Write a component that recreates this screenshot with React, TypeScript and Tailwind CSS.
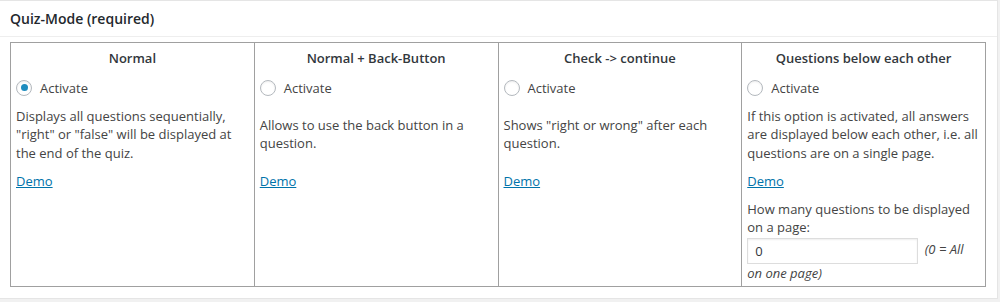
function Radio({ checked = false }: { checked?: boolean }) {
  return (
    <span className="inline-flex h-4 w-4 shrink-0 items-center justify-center rounded-full border border-[#b4b9be] bg-white shadow-[inset_0_1px_2px_rgba(0,0,0,0.07)]">
      {checked && <span className="h-[7px] w-[7px] rounded-full bg-[#1e8cbe]" />}
    </span>
  );
}

const modes = [
  {
    title: "Normal",
    checked: true,
    text: 'Displays all questions sequentially, "right" or "false" will be displayed at the end of the quiz.',
  },
  {
    title: "Normal + Back-Button",
    checked: false,
    text: "Allows to use the back button in a question.",
  },
  {
    title: "Check -> continue",
    checked: false,
    text: 'Shows "right or wrong" after each question.',
  },
  {
    title: "Questions below each other",
    checked: false,
    text: "If this option is activated, all answers are displayed below each other, i.e. all questions are on a single page.",
  },
];

export default function App() {
  return (
    <div
      className="h-[302px] w-[1000px] overflow-hidden bg-[#f1f1f1] text-[13px] leading-[1.4] text-[#444]"
      style={{ fontFamily: '"Open Sans", "Noto Sans", sans-serif' }}
    >
      <div className="h-[299px] w-[998px] border border-l-0 border-[#e5e5e5] bg-white">
        <h2 className="border-b border-[#eee] px-[10px] pb-[7px] pt-[8px] text-[14px] font-semibold leading-[1.4] text-[#23282d]">
          Quiz-Mode (required)
        </h2>
        <div className="pl-[10px] pr-[12px] pt-[5px]">
          <table className="w-[976px] table-fixed border-collapse border border-[#a0a0a0]">
            <tbody>
              <tr>
                {modes.map((m) => (
                  <th
                    key={m.title}
                    className="border-x border-[#a0a0a0] px-[5px] pb-[5px] pt-[5px] text-center text-[13px] font-semibold leading-[20px] text-[#32373c]"
                  >
                    {m.title}
                  </th>
                ))}
              </tr>
              <tr>
                {modes.map((m) => (
                  <td key={m.title} className="border-x border-[#a0a0a0] px-[5px] py-[5px]">
                    <label className="flex items-center gap-[8px] leading-[20px]">
                      <Radio checked={m.checked} />
                      Activate
                    </label>
                  </td>
                ))}
              </tr>
              <tr>
                {modes.map((m) => (
                  <td
                    key={m.title}
                    className="border-x border-[#a0a0a0] px-[5px] py-[4px] align-middle leading-[18.5px]"
                  >
                    {m.text}
                  </td>
                ))}
              </tr>
              <tr>
                {modes.map((m, i) => (
                  <td
                    key={m.title}
                    className="border-x border-[#a0a0a0] px-[5px] pb-[4px] pt-[6px] align-top leading-[18.5px]"
                  >
                    <a href="#" className="text-[#0073aa] underline">
                      Demo
                    </a>
                    {i === 3 && (
                      <div className="mt-[9px]">
                        How many questions to be displayed on a page:
                        <br />
                        <input
                          type="text"
                          defaultValue="0"
                          className="mr-[3px] mt-px h-[26px] w-[171px] border border-[#ddd] bg-white px-[7px] align-middle text-[13px] text-[#32373c] shadow-[inset_0_1px_2px_rgba(0,0,0,0.07)] outline-none"
                        />{" "}
                        <span className="text-[13px] italic leading-[18px]">(0 = All on one page)</span>
                      </div>
                    )}
                  </td>
                ))}
              </tr>
            </tbody>
          </table>
        </div>
      </div>
    </div>
  );
}
